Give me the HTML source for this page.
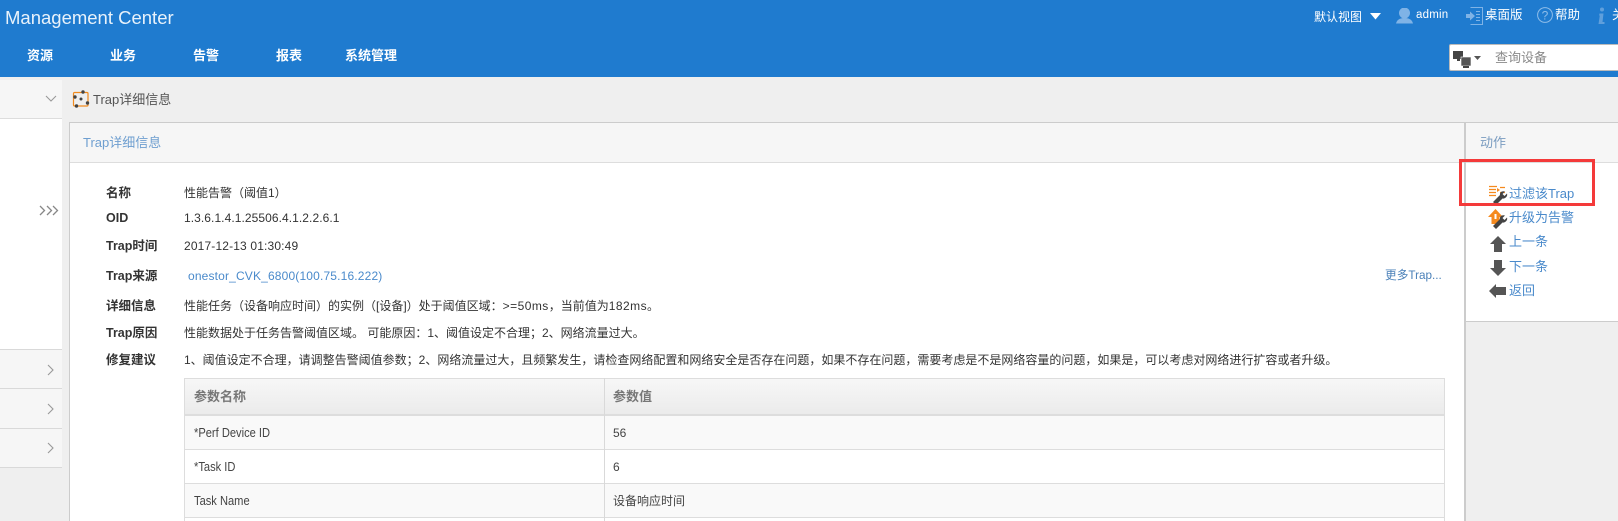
<!DOCTYPE html>
<html><head><meta charset="utf-8"><style>
html,body{margin:0;padding:0}
body{width:1618px;height:521px;overflow:hidden;position:relative;background:#efefef;font-family:"Liberation Sans","Noto Sans CJK SC",sans-serif;font-size:12px;color:#333}
div,span,svg{position:absolute;box-sizing:border-box}
i{font-style:normal;letter-spacing:.45px}
.t{white-space:nowrap;line-height:16px}
.w{color:#fff}
.n{color:#fff;font-weight:bold;font-size:13px;top:48px}
.l{left:106px;font-weight:bold;font-size:12.5px;color:#333}
.v{left:184px;color:#333;font-size:12px}
.a{left:1509px;color:#4a8acb;font-size:13px}
.line{background:#d9d9d9}
.r{left:184px;width:1261px;border:1px solid #ddd;border-top:0}
.c{color:#444;font-size:12px}
.nr{font-size:12.5px;transform:scaleX(.89);transform-origin:left center}
</style></head><body>
<div style="left:0;top:0;width:1618px;height:77px;background:#1f7bcf"></div>
<div class="t w" style="left:5px;top:7px;font-size:18.5px;line-height:22px;color:#e8f2fb">Management Center</div>
<div class="t n" style="left:27px">资源</div>
<div class="t n" style="left:110px">业务</div>
<div class="t n" style="left:193px">告警</div>
<div class="t n" style="left:276px">报表</div>
<div class="t n" style="left:345px">系统管理</div>

<div class="t w" style="left:1314px;top:9px;font-size:12px">默认视图</div>
<svg style="left:1370px;top:13px" width="11" height="7"><path d="M0 0H11L5.500 6.500Z" fill="#fff"/></svg>
<svg style="left:1395px;top:8px" width="19" height="16"><circle cx="9.500" cy="5" r="5.500" fill="#7fb3e6"/><path d="M1 15.500C2 11 6 10 9.500 10S17 11 18 15.500Z" fill="#7fb3e6"/></svg>
<div class="t w" style="left:1416px;top:7px;font-size:11.5px;letter-spacing:.2px">admin</div>
<svg style="left:1465px;top:7px" width="18" height="18"><path d="M5.500 .5H17.500V17.500H5.500M15 4.500H11M15 7.500H11M15 10.500H11M15 13.500H11" fill="none" stroke="#7fb3e6"/><path d="M1 7H5V4.500L10 9L5 13.500V11H1Z" fill="#7fb3e6"/></svg>
<div class="t w" style="left:1485px;top:7px;font-size:12.5px">桌面版</div>
<svg style="left:1537px;top:7px" width="16" height="16"><circle cx="8" cy="8" r="7.400" fill="none" stroke="#8fbde9"/><text x="8" y="12.500" text-anchor="middle" font-size="12" fill="#8fbde9" font-family="Liberation Sans">?</text></svg>
<div class="t w" style="left:1555px;top:7px;font-size:12.5px">帮助</div>
<svg style="left:1597px;top:7px" width="9" height="17"><circle cx="5" cy="2.500" r="2" fill="#5f9fdc"/><path d="M2.500 6.500H6.500L5.500 15H7.500V17H1.500L2.800 8.500H2Z" fill="#5f9fdc"/></svg>
<div class="t w" style="left:1612px;top:7px;font-size:12.5px">关</div>

<div style="left:1449px;top:44px;width:180px;height:27px;background:#fff;border:1px solid #bbb;border-radius:2px"></div>
<svg style="left:1453px;top:50px" width="32" height="18"><rect x="0" y="1" width="10" height="8" fill="#444"/><rect x="4" y="9" width="3" height="2" fill="#444"/><rect x="8" y="7" width="10" height="9" fill="#555" stroke="#fff" stroke-width=".6"/><rect x="10" y="16" width="6" height="2" fill="#444"/><path d="M21 6H28L24.500 10Z" fill="#555"/></svg>
<div class="t" style="left:1495px;top:50px;font-size:13px;color:#8a8a8a">查询设备</div>

<!-- sidebar -->
<div style="left:0;top:80px;width:62px;height:39px;background:#f6f6f6;border-bottom:1px solid #ddd"></div>
<div style="left:0;top:119px;width:62px;height:230px;background:#fff"></div>
<div style="left:0;top:349px;width:62px;height:119px;background:#f6f6f6"></div>
<div class="line" style="left:0;top:349px;width:62px;height:1px"></div>
<div class="line" style="left:0;top:388px;width:62px;height:1px"></div>
<div class="line" style="left:0;top:428px;width:62px;height:1px"></div>
<div class="line" style="left:0;top:467px;width:62px;height:1px"></div>
<svg style="left:45px;top:95px" width="12" height="8"><path d="M1 1L6 6L11 1" fill="none" stroke="#999" stroke-width="1.100"/></svg>
<svg style="left:47px;top:364px" width="8" height="12"><path d="M1 1L6 6L1 11" fill="none" stroke="#999" stroke-width="1.100"/></svg>
<svg style="left:47px;top:403px" width="8" height="12"><path d="M1 1L6 6L1 11" fill="none" stroke="#999" stroke-width="1.100"/></svg>
<svg style="left:47px;top:442px" width="8" height="12"><path d="M1 1L6 6L1 11" fill="none" stroke="#999" stroke-width="1.100"/></svg>
<svg style="left:39px;top:205px" width="20" height="11"><path d="M1 1L5.500 5.500L1 10M8 1L12.500 5.500L8 10M14 1L18.500 5.500L14 10" fill="none" stroke="#888" stroke-width="1.300"/></svg>

<!-- breadcrumb -->
<svg style="left:72px;top:90px" width="18" height="18"><rect x="1.500" y="2.500" width="14.500" height="13.500" rx="1" fill="none" stroke="#f08a1d" stroke-width="1.200"/><g fill="#444"><circle cx="3" cy="7" r="1.700"/><circle cx="11" cy="2" r="1.700"/><circle cx="15.500" cy="13" r="1.700"/><circle cx="4.500" cy="16" r="1.700"/><circle cx="9" cy="9" r="1.500"/></g></svg>
<div class="t" style="left:93px;top:92px;font-size:13px;color:#555">Trap详细信息</div>

<!-- main panel -->
<div style="left:69px;top:122px;width:1397px;height:399px;background:#fff;border:1px solid #ccc;border-bottom:0;border-right:2px solid #ccc"></div>
<div style="left:70px;top:123px;width:1394px;height:40px;background:#f6f6f6;border-bottom:1px solid #ddd"></div>
<div class="t" style="left:83px;top:135px;font-size:13px;color:#6f9fd0">Trap详细信息</div>

<div class="t l" style="top:185px">名称</div><div class="t v" style="top:185px">性能告警（阈值1）</div>
<div class="t l" style="top:210px">OID</div><div class="t v" style="top:210px;letter-spacing:.07px">1.3.6.1.4.1.25506.4.1.2.2.6.1</div>
<div class="t l" style="top:238px">Trap时间</div><div class="t v" style="top:238px;letter-spacing:.15px">2017-12-13 01:30:49</div>
<div class="t l" style="top:268px">Trap来源</div><div class="t v" style="top:268px;left:188px;color:#4a8acb;letter-spacing:.16px">onestor_CVK_6800(100.75.16.222)</div>
<div class="t" style="left:1385px;top:268px;color:#4a80b8;font-size:11.7px">更多Trap...</div>
<div class="t l" style="top:298px">详细信息</div><div class="t v" style="top:298px">性能任务（设备响应时间）的实例（[设备]）处于阈值区域：<i>&gt;=50ms</i>，当前值为<i>182ms</i>。</div>
<div class="t l" style="top:325px">Trap原因</div><div class="t v" style="top:325px">性能数据处于任务告警阈值区域。 可能原因：1、阈值设定不合理；2、网络流量过大。</div>
<div class="t l" style="top:352px">修复建议</div><div class="t v" style="top:352px">1、阈值设定不合理，请调整告警阈值参数；2、网络流量过大，且频繁发生，请检查网络配置和网络安全是否存在问题，如果不存在问题，需要考虑是不是网络容量的问题，如果是，可以考虑对网络进行扩容或者升级。</div>

<!-- table -->
<div style="left:184px;top:378px;width:1261px;height:38px;border:1px solid #ddd;border-bottom:2px solid #ddd;background:linear-gradient(#f7f7f7,#ebebeb)"></div>
<div class="r" style="top:416px;height:34px;background:#f9f9f9"></div>
<div class="r" style="top:450px;height:34px;background:#fff"></div>
<div class="r" style="top:484px;height:34px;background:#f9f9f9"></div>
<div class="r" style="top:518px;height:3px;background:#fff;border-bottom:0"></div>
<div class="line" style="left:604px;top:378px;width:1px;height:143px"></div>
<div class="t" style="left:194px;top:389px;font-weight:bold;font-size:13px;color:#777">参数名称</div>
<div class="t" style="left:613px;top:389px;font-weight:bold;font-size:13px;color:#777">参数值</div>
<div class="t c nr" style="left:194px;top:425px">*Perf Device ID</div><div class="t c" style="left:613px;top:425px">56</div>
<div class="t c nr" style="left:194px;top:459px">*Task ID</div><div class="t c" style="left:613px;top:459px">6</div>
<div class="t c nr" style="left:194px;top:493px">Task Name</div><div class="t c" style="left:613px;top:493px">设备响应时间</div>

<!-- action panel -->
<div style="left:1466px;top:122px;width:152px;height:200px;background:#fff;border-top:1px solid #ccc;border-bottom:1px solid #ccc"></div>
<div style="left:1466px;top:123px;width:152px;height:40px;background:#f6f6f6;border-bottom:1px solid #ddd"></div>
<div class="t" style="left:1480px;top:135px;font-size:13px;color:#7a9cc0">动作</div>

<svg style="left:1488px;top:185px" width="20" height="20"><path d="M1 1.500H9M1 4.500H8M1 7.500H8M1 10.500H8M12 2.500H17M12 7.500H17" stroke="#f58a1f" stroke-width="1.200" fill="none"/><path d="M9 3L12 5L9 7Z" fill="#f58a1f"/><path d="M5 17L12 10C11.500 7.500 14 5.500 17 6.500L14.500 9L16.500 11L19 8.500C20 11.500 17 14 14.500 13.500L8 20Z" fill="#444"/></svg>
<svg style="left:1488px;top:209px" width="20" height="20"><path d="M7.500 0L15 8H11.500V15H3.500V8H0Z" fill="#f58a1f"/><rect x="6.500" y="5" width="2" height="5" fill="#fff"/><path d="M5 17L12 10C11.500 7.500 14 5.500 17 6.500L14.500 9L16.500 11L19 8.500C20 11.500 17 14 14.500 13.500L8 20Z" fill="#444"/></svg>
<svg style="left:1490px;top:236px" width="16" height="16"><path d="M8 0L16 8H12V16H4V8H0Z" fill="#555"/></svg>
<svg style="left:1490px;top:260px" width="16" height="16"><path d="M4 0H12V8H16L8 16L0 8H4Z" fill="#555"/></svg>
<svg style="left:1489px;top:284px" width="17" height="14"><path d="M0 7L7 0V3H17V11H7V14Z" fill="#555"/></svg>
<div class="t a" style="top:186px">过滤该Trap</div>
<div class="t a" style="top:210px">升级为告警</div>
<div class="t a" style="top:234px">上一条</div>
<div class="t a" style="top:259px">下一条</div>
<div class="t a" style="top:283px">返回</div>

<div style="left:1459px;top:159px;width:136px;height:47px;border:3px solid #f43a3a"></div>
</body></html>
